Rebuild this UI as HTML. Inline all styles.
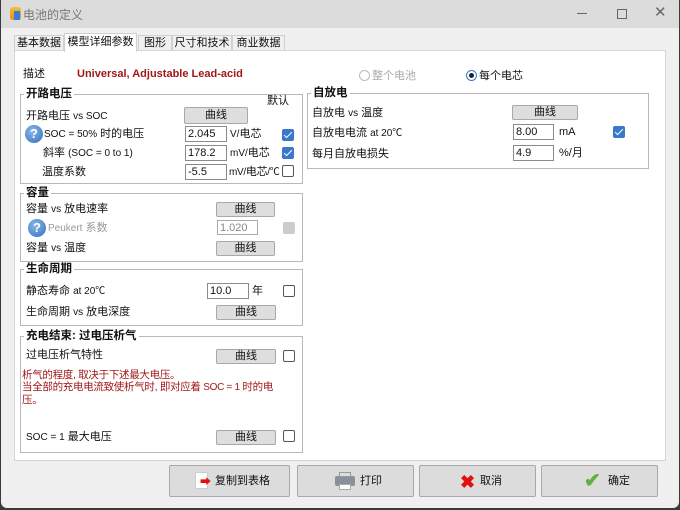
<!DOCTYPE html>
<html><head><meta charset="utf-8"><style>
*{box-sizing:border-box;margin:0;padding:0}
body{width:680px;height:510px;background:#3a3a3a;font-family:"Liberation Sans","Noto Sans CJK SC",sans-serif;font-size:11px;color:#111;position:relative;overflow:hidden}
.win{position:absolute;left:1px;top:0;width:678px;height:508px;background:#f0f0f0;border-radius:0 0 6px 6px;overflow:hidden}
.tb{position:absolute;left:0;top:0;width:678px;height:28px;background:#dcdcdc}
.a{position:absolute;white-space:nowrap;line-height:14px}
.l{font-size:10px}
.tab{position:absolute;top:35px;height:16px;border:1px solid #d0d0d0;background:#f0f0f0;font-size:11px;text-align:center;line-height:14px}
.panel{position:absolute;left:13px;top:50px;width:652px;height:411px;background:#fff;border:1px solid #d5d5d5}
.g{position:absolute;border:1px solid #b8b8b8}
.gt{position:absolute;background:#fff;font-weight:bold;font-size:11.5px;padding:0 2px;line-height:14px}
.btn{position:absolute;background:#dedede;border:1px solid #a8a8a8;border-radius:2px;text-align:center;font-size:11px;line-height:13px}
.in{position:absolute;border:1px solid #8a8a8a;background:#fff;padding-left:2px;font-size:11px;line-height:14px}
.cb{position:absolute;width:12px;height:12px;border:1px solid #555;border-radius:2px;background:#fff}
.cb.on{background:#3a78c9;border-color:#3a78c9}
.cb.on::after{content:"";position:absolute;left:3px;top:0px;width:3px;height:7px;border:solid #fff;border-width:0 1.5px 1.5px 0;transform:rotate(45deg)}
.q{position:absolute;width:18px;height:18px;border-radius:50%;background:radial-gradient(circle at 40% 35%,#8bb8e8,#2f6fbf);color:#fff;font-weight:bold;font-size:13px;text-align:center;line-height:18px}
.red{color:#a01818}
.bb{position:absolute;top:465px;height:32px;background:#dcdcdc;border:1px solid #a8a8a8;border-radius:2px;font-size:11px;line-height:30px}
</style></head><body><div class="win">
<div class="tb"></div>
<div class="a" style="left:9px;top:7px;width:11px;height:13px;background:linear-gradient(#f5c230,#e88a20);border-radius:3px"></div>
<div class="a" style="left:13px;top:11px;width:6px;height:9px;background:#3a7bd5"></div>
<div class="a" style="left:22px;top:8px;font-size:12px;color:#777">电池的定义</div>
<div class="a" style="left:576px;top:13px;width:10px;height:1px;background:#666"></div>
<div class="a" style="left:616px;top:9px;width:10px;height:10px;border:1px solid #666"></div>
<div class="a" style="left:653px;top:6px;font-size:15px;color:#666">✕</div>

<div class="tab" style="left:13px;width:50px">基本数据</div>
<div class="tab" style="left:137px;width:34px">图形</div>
<div class="tab" style="left:171px;width:60px">尺寸和技术</div>
<div class="tab" style="left:231px;width:53px">商业数据</div>
<div class="panel"></div>
<div class="tab" style="left:63px;top:33px;width:73px;height:19px;background:#fff;border-bottom:none;line-height:16px">模型详细参数</div>

<div class="a" style="left:22px;top:67px">描述</div>
<div class="a red" style="left:76px;top:67px;font-weight:bold">Universal, Adjustable Lead-acid</div>

<div class="g" style="left:19px;top:94px;width:283px;height:90px"></div>
<div class="gt" style="left:23px;top:87px">开路电压</div>
<div class="a" style="left:266px;top:94px">默认</div>
<div class="a" style="left:25px;top:109px">开路电压 <span class="l">vs SOC</span></div>
<div class="btn" style="left:183px;top:107px;width:64px;height:17px;line-height:15px">曲线</div>
<div class="q" style="left:24px;top:125px">?</div>
<div class="a" style="left:43px;top:127px"><span class="l">SOC = 50%</span> 时的电压</div>
<div class="in" style="left:184px;top:126px;width:42px;height:16px">2.045</div>
<div class="a" style="left:229px;top:127px"><span class="l">V/</span>电芯</div>
<div class="cb on" style="left:281px;top:129px"></div>
<div class="a" style="left:42px;top:146px">斜率 <span class="l">(SOC = 0 to 1)</span></div>
<div class="in" style="left:184px;top:145px;width:42px;height:16px">178.2</div>
<div class="a" style="left:229px;top:146px"><span class="l">mV/</span>电芯</div>
<div class="cb on" style="left:281px;top:147px"></div>
<div class="a" style="left:41px;top:165px">温度系数</div>
<div class="in" style="left:184px;top:164px;width:42px;height:16px">-5.5</div>
<div class="a" style="left:228px;top:165px;letter-spacing:-0.3px"><span class="l">mV/</span>电芯<span class="l">/℃</span></div>
<div class="cb" style="left:281px;top:165px"></div>

<div class="g" style="left:19px;top:193px;width:283px;height:69px"></div>
<div class="gt" style="left:23px;top:186px">容量</div>
<div class="a" style="left:25px;top:202px">容量 <span class="l">vs</span> 放电速率</div>
<div class="btn" style="left:215px;top:202px;width:59px;height:15px">曲线</div>
<div class="q" style="left:27px;top:219px">?</div>
<div class="a" style="left:47px;top:221px;color:#999"><span class="l">Peukert</span> 系数</div>
<div class="in" style="left:216px;top:220px;width:41px;height:15px;border-color:#aaa;color:#888">1.020</div>
<div class="cb" style="left:282px;top:222px;background:#ccc;border-color:#ccc"></div>
<div class="a" style="left:25px;top:241px">容量 <span class="l">vs</span> 温度</div>
<div class="btn" style="left:215px;top:241px;width:59px;height:15px">曲线</div>

<div class="g" style="left:19px;top:269px;width:283px;height:57px"></div>
<div class="gt" style="left:23px;top:262px">生命周期</div>
<div class="a" style="left:25px;top:284px">静态寿命 <span class="l">at 20℃</span></div>
<div class="in" style="left:206px;top:283px;width:42px;height:16px">10.0</div>
<div class="a" style="left:251px;top:284px">年</div>
<div class="cb" style="left:282px;top:285px"></div>
<div class="a" style="left:25px;top:305px">生命周期 <span class="l">vs</span> 放电深度</div>
<div class="btn" style="left:215px;top:305px;width:60px;height:15px">曲线</div>

<div class="g" style="left:19px;top:336px;width:283px;height:117px"></div>
<div class="gt" style="left:23px;top:329px">充电结束: 过电压析气</div>
<div class="a" style="left:25px;top:348px">过电压析气特性</div>
<div class="btn" style="left:215px;top:349px;width:60px;height:15px">曲线</div>
<div class="cb" style="left:282px;top:350px"></div>
<div class="a red" style="left:21px;top:369px;line-height:12px;font-size:10.5px;letter-spacing:-0.3px">析气的程度, 取决于下述最大电压。<br>当全部的充电电流致使析气时, 即对应着 <span class="l">SOC = 1</span> 时的电<br>压。</div>
<div class="a" style="left:25px;top:430px"><span class="l">SOC = 1</span> 最大电压</div>
<div class="btn" style="left:215px;top:430px;width:60px;height:15px">曲线</div>
<div class="cb" style="left:282px;top:430px"></div>

<div class="a" style="left:358px;top:70px;width:11px;height:11px;border:1px solid #bbb;border-radius:50%"></div>
<div class="a" style="left:371px;top:69px;color:#aaa">整个电池</div>
<div class="a" style="left:465px;top:70px;width:11px;height:11px;border:1px solid #3a78c9;border-radius:50%"></div>
<div class="a" style="left:468px;top:73px;width:5px;height:5px;background:#222;border-radius:50%"></div>
<div class="a" style="left:478px;top:69px">每个电芯</div>

<div class="g" style="left:306px;top:93px;width:342px;height:76px"></div>
<div class="gt" style="left:310px;top:86px">自放电</div>
<div class="a" style="left:311px;top:106px">自放电 <span class="l">vs</span> 温度</div>
<div class="btn" style="left:511px;top:105px;width:66px;height:15px">曲线</div>
<div class="a" style="left:311px;top:126px">自放电电流 <span class="l">at 20℃</span></div>
<div class="in" style="left:512px;top:124px;width:41px;height:16px">8.00</div>
<div class="a" style="left:558px;top:125px">mA</div>
<div class="cb on" style="left:612px;top:126px"></div>
<div class="a" style="left:311px;top:147px">每月自放电损失</div>
<div class="in" style="left:512px;top:145px;width:41px;height:16px">4.9</div>
<div class="a" style="left:558px;top:146px">%/月</div>

<div class="bb" style="left:168px;width:121px">
 <div class="a" style="left:25px;top:6px;width:13px;height:17px;background:#fff;border:1px solid #ccc"></div>
 <div class="a" style="left:30px;top:11px;color:#e01010;font-size:11px;line-height:11px">➡</div>
 <div class="a" style="left:45px;top:8px">复制到表格</div>
</div>
<div class="bb" style="left:296px;width:117px">
 <div class="a" style="left:37px;top:10px;width:20px;height:10px;background:#8a9099;border-radius:2px"></div>
 <div class="a" style="left:41px;top:6px;width:12px;height:5px;background:#ddd;border:1px solid #999"></div>
 <div class="a" style="left:41px;top:18px;width:12px;height:6px;background:#fff;border:1px solid #aaa"></div>
 <div class="a" style="left:62px;top:8px">打印</div>
</div>
<div class="bb" style="left:418px;width:117px">
 <div class="a" style="left:40px;top:7px;color:#e01010;font-size:18px;font-weight:bold;line-height:18px">✖</div>
 <div class="a" style="left:60px;top:8px">取消</div>
</div>
<div class="bb" style="left:540px;width:117px">
 <div class="a" style="left:42px;top:5px;color:#5fb040;font-size:20px;font-weight:bold;line-height:20px">✔</div>
 <div class="a" style="left:66px;top:8px">确定</div>
</div>
</div></body></html>
